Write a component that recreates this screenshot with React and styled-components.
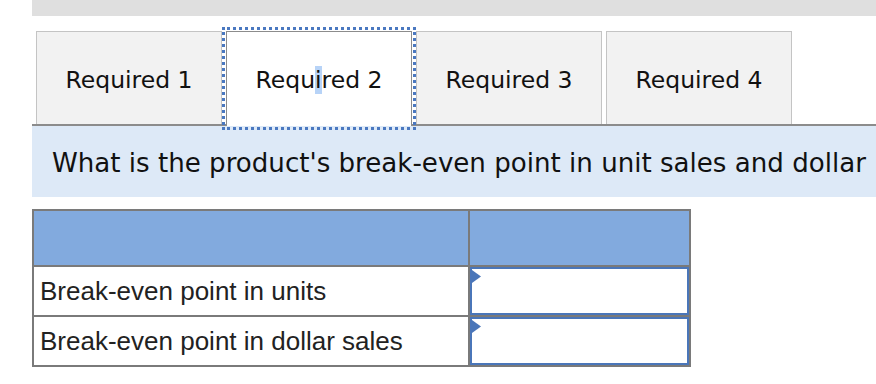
import React from 'react';
import styled, { createGlobalStyle } from 'styled-components';

const GlobalStyle = createGlobalStyle`
    body {
        margin: 0;
        background: #ffffff;
        font-family: "DejaVu Sans", Verdana, sans-serif;
    }
`

const tabs = ['Required 1', 'Required 2', 'Required 3', 'Required 4'];
const rows = ['Break-even point in units', 'Break-even point in dollar sales'];

const App = () => {
    return (
        <Page>
            <GlobalStyle />
            <TopBar />
            <TabList>
                {tabs.map((label, i) => (
                    <Tab key={label} active={i === 1}>
                        {i === 1 ? (
                            <span>Requ<Caret>i</Caret>red 2</span>
                        ) : label}
                    </Tab>
                ))}
            </TabList>
            <Question>
                <QuestionText>What is the product's break-even point in unit sales and dollar sales?</QuestionText>
            </Question>
            <Table>
                <thead>
                    <tr>
                        <HeadCell />
                        <HeadCell />
                    </tr>
                </thead>
                <tbody>
                    {rows.map((label) => (
                        <tr key={label}>
                            <LabelCell>{label}</LabelCell>
                            <InputCell>
                                <InputBox>
                                    <Marker viewBox="0 0 9 13">
                                        <polygon points="0,0 9,6.5 0,13" fill="#4a76b9" />
                                    </Marker>
                                </InputBox>
                            </InputCell>
                        </tr>
                    ))}
                </tbody>
            </Table>
        </Page>
    )
}

const Page = styled.div`
    width: 876px;
    height: 384px;
    padding-left: 32px;
    box-sizing: border-box;
    overflow: hidden;
`

const TopBar = styled.div`
    height: 16px;
    background-color: #dfdfdf;
`

const TabList = styled.div`
    display: flex;
    gap: 4px;
    margin-top: 15px;
    padding-left: 4px;
    height: 93px;
    border-bottom: 2px solid #8c8c8c;
`

const Tab = styled.div`
    position: relative;
    width: 186px;
    box-sizing: border-box;
    display: flex;
    align-items: center;
    justify-content: center;
    padding-top: 4px;
    padding-bottom: ${(p) => (p.active ? '2px' : '0')};
    font-size: 23.5px;
    color: #111;
    background-color: ${(p) => (p.active ? '#ffffff' : '#f2f2f2')};
    border: 1px solid ${(p) => (p.active ? '#8c8c8c' : '#c4c4c4')};
    border-bottom: none;
    height: ${(p) => (p.active ? '95px' : '93px')};
    margin-bottom: ${(p) => (p.active ? '-2px' : '0')};
    outline: ${(p) => (p.active ? '3px dotted #4a78c0' : 'none')};
    outline-offset: 1px;
    z-index: ${(p) => (p.active ? 1 : 0)};
`

const Caret = styled.span`
    background-color: #b7d3f7;
`

const Question = styled.div`
    height: 71px;
    background-color: #dde9f7;
    padding-left: 20px;
    padding-top: 2px;
    box-sizing: border-box;
    display: flex;
    align-items: center;
    font-size: 26.1px;
    color: #111;
`

const QuestionText = styled.div`
    max-width: 820px;
    white-space: nowrap;
    overflow: hidden;
`

const Table = styled.table`
    margin-top: 12px;
    border-collapse: collapse;
    width: 659px;
    border: 2px solid #7a7a7a;
    font-family: "Liberation Sans", Arial, sans-serif;
`

const HeadCell = styled.th`
    height: 54px;
    padding: 0;
    background-color: #82aade;
    border: 2px solid #7a7a7a;
    &:first-child {
        width: 434px;
    }
`

const LabelCell = styled.td`
    height: 48px;
    padding: 0 0 0 6px;
    border: 2px solid #7a7a7a;
    font-size: 26px;
    color: #222;
`

const InputCell = styled.td`
    padding: 0;
    border: 2px solid #7a7a7a;
    height: 48px;
`

const InputBox = styled.div`
    position: relative;
    height: 48px;
    box-sizing: border-box;
    border: 2px solid #4a76b9;
    background: #ffffff;
`

const Marker = styled.svg`
    position: absolute;
    left: 0;
    top: 1px;
    width: 9px;
    height: 13px;
`

export default App
